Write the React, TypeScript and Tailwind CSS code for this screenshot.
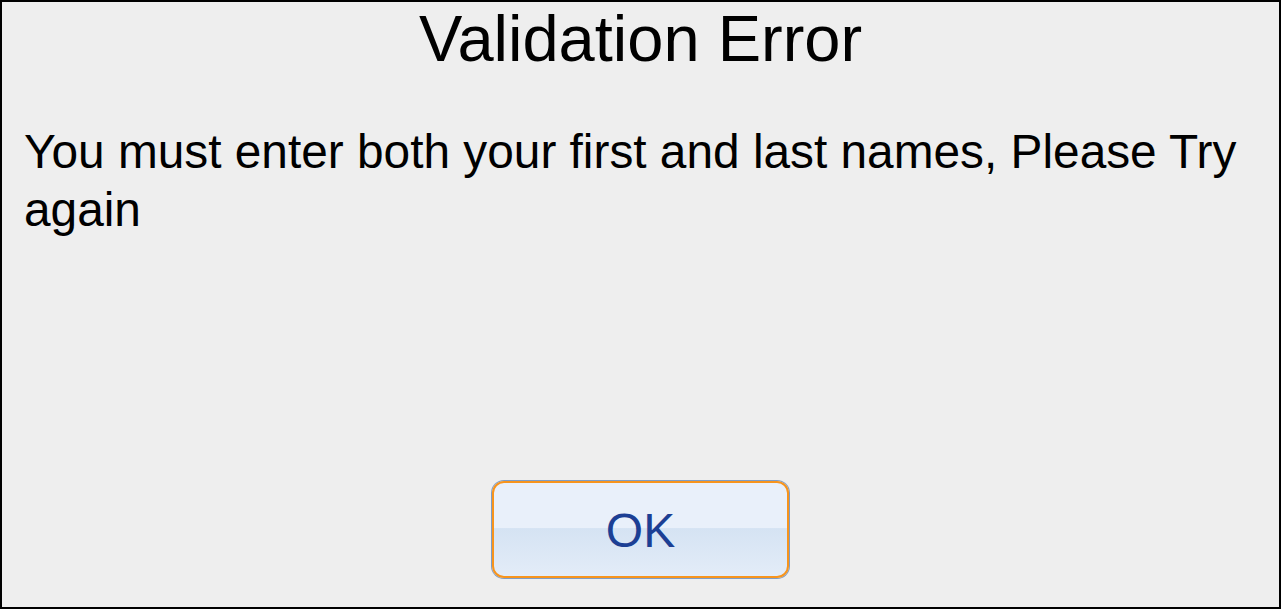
import React from "react";

export default function App() {
  return (
    <div
      className="w-[1281px] h-[609px] border-2 border-black bg-[#eeeeee] flex flex-col text-black"
      style={{ fontFamily: '"Liberation Sans", Arial, sans-serif' }}
    >
      <h1 className="mt-px text-center text-[65px] leading-[72px] font-normal">
        Validation Error
      </h1>
      <p className="mt-[48px] pl-[22px] pr-[20px] text-[47.8px] leading-[58px]">
        You must enter both your first and last names, Please Try again
      </p>
      <div className="flex-1" />
      <div className="flex justify-center mb-[29px]">
        <button
          type="button"
          className="w-[297px] h-[97px] rounded-[12px] border-2 border-[#f7941d] shadow-[0_0_0_1px_#7f9cc4] bg-[linear-gradient(to_bottom,#e9f0fa_0%,#e9f0fa_48%,#d5e3f3_49%,#e3ecf8_100%)] flex items-center justify-center p-0"
        >
          <span className="text-[48px] leading-none text-[#1c3f94] mt-[2px]" style={{ fontFamily: '"Liberation Sans", Arial, sans-serif' }}>
            OK
          </span>
        </button>
      </div>
    </div>
  );
}
